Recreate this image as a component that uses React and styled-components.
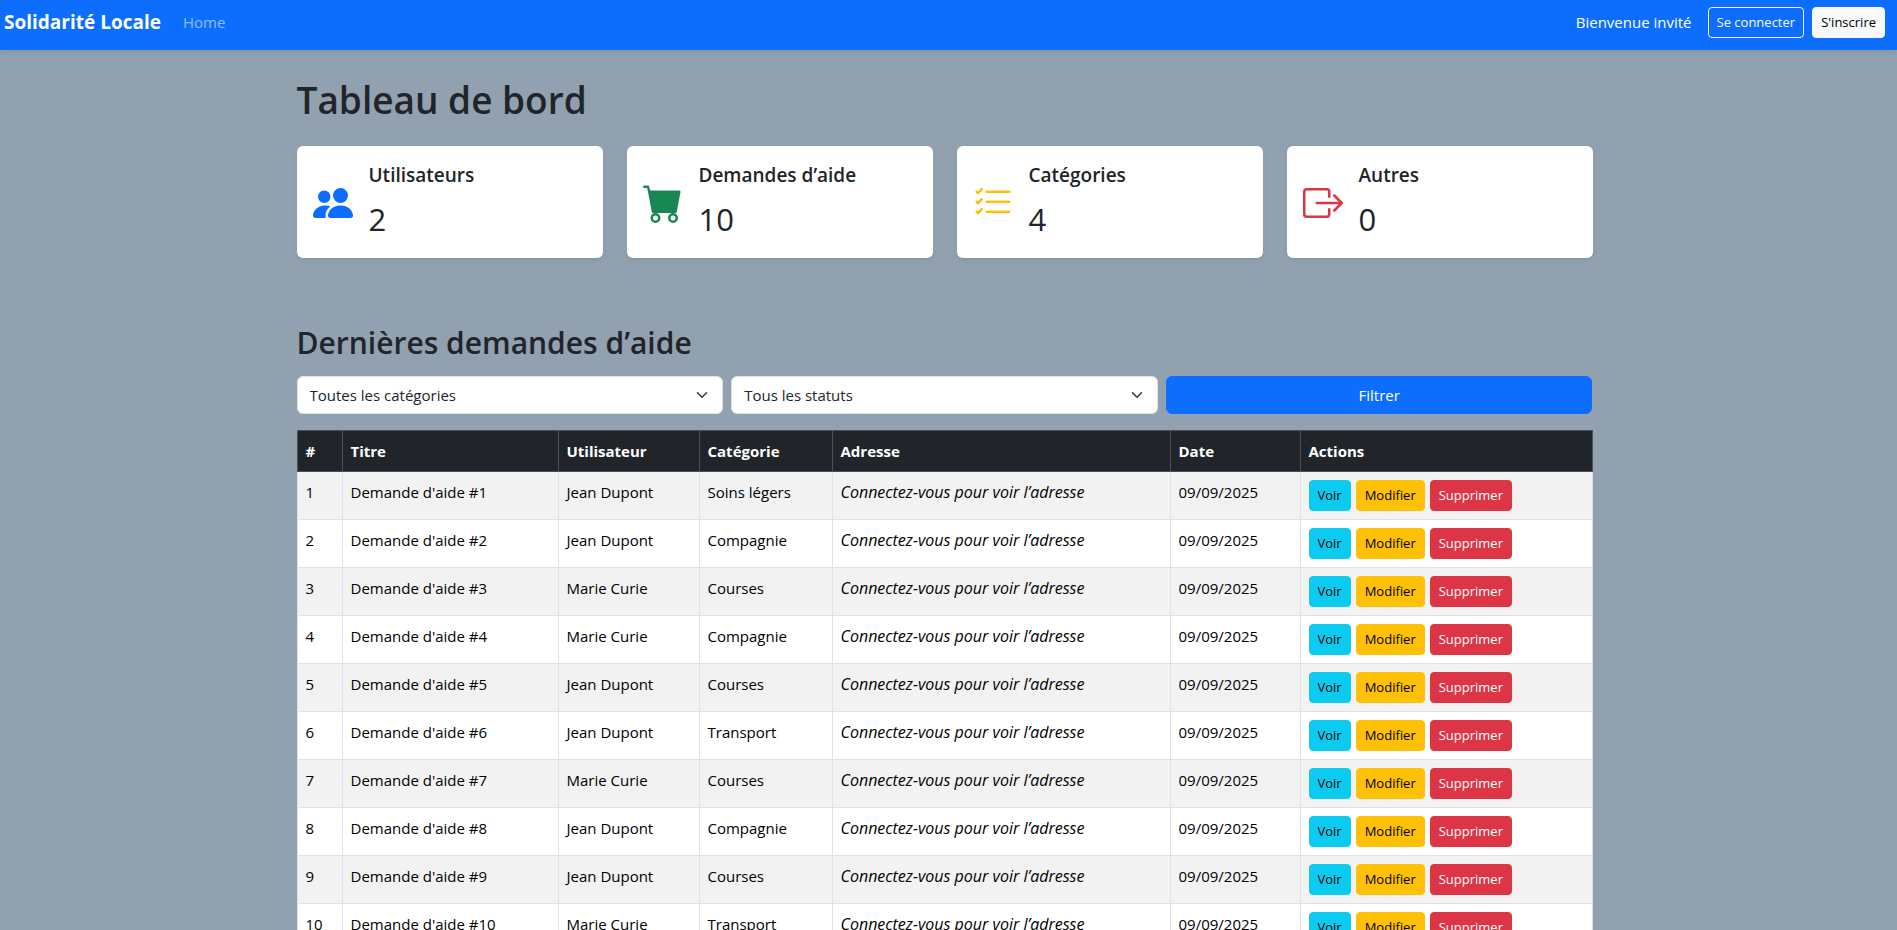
import React from "react";
import styled, { createGlobalStyle } from "styled-components";
import { BsPeopleFill, BsCartFill, BsListCheck, BsBoxArrowRight } from "react-icons/bs";

const GlobalStyle = createGlobalStyle`
  *, *::before, *::after { box-sizing: border-box; }
  body {
    margin: 0;
    background: #92a1b0;
    color: #212529;
    font-family: "Segoe UI", "Open Sans", "Noto Sans", sans-serif;
    font-size: 15px;
    line-height: 24px;
  }
`;

const Navbar = styled.header`
  display: flex;
  align-items: center;
  min-height: 50px;
  padding: 2px 12px 8px 4px;
  background: #0d6efd;
  box-shadow: 0 2px 4px rgba(0, 0, 0, 0.075);
`;

const Brand = styled.a`
  margin-right: 14px;
  color: #fff;
  font-size: 19px;
  font-weight: 700;
  text-decoration: none;
`;

const NavLinks = styled.nav`
  flex: 1;
`;

const NavLink = styled.a`
  padding: 8px;
  color: rgba(255, 255, 255, 0.55);
  text-decoration: none;
`;

const Account = styled.div`
  display: flex;
  align-items: center;
  gap: 8px;
`;

const Welcome = styled.span`
  margin-right: 8px;
  color: #fff;
`;

const variants = {
  outline: ["transparent", "#f8f9fa", "#f8f9fa"],
  light: ["#f8f9fa", "#000", "#f8f9fa"],
  info: ["#0dcaf0", "#000", "#0dcaf0"],
  warning: ["#ffc107", "#000", "#ffc107"],
  danger: ["#dc3545", "#fff", "#dc3545"],
};

const SmallButton = styled.button`
  height: 31px;
  padding: 0 8px;
  background: ${(p) => variants[p.$variant][0]};
  color: ${(p) => variants[p.$variant][1]};
  border: 1px solid ${(p) => variants[p.$variant][2]};
  border-radius: 4px;
  font: inherit;
  font-size: 13px;
  line-height: 21px;
  white-space: nowrap;
  cursor: pointer;
`;

const Main = styled.main`
  padding: 24px 8px 24px 0;
`;

const Container = styled.div`
  width: 100%;
  max-width: 1296px;
  margin: 0 auto;
`;

const PageTitle = styled.h1`
  margin: 0 0 20px;
  font-size: 37px;
  font-weight: 600;
  line-height: 52px;
`;

const Stats = styled.section`
  display: grid;
  grid-template-columns: repeat(4, 1fr);
  gap: 24px;
  margin-bottom: 64px;
`;

const StatCard = styled.article`
  display: flex;
  align-items: center;
  gap: 16px;
  padding: 16px;
  background: #fff;
  border-radius: 6px;
  box-shadow: 0 2px 4px rgba(0, 0, 0, 0.075);
`;

const StatIcon = styled.span`
  display: flex;
  padding-top: 2px;
  color: ${(p) => p.$color};
  font-size: 40px;
`;

const StatTitle = styled.h5`
  margin: 0 0 8px;
  font-size: 19px;
  font-weight: 600;
  line-height: 26px;
`;

const StatValue = styled.p`
  margin: 0;
  font-size: 31px;
  line-height: 46px;
`;

const SectionTitle = styled.h2`
  margin: 0 0 12px;
  font-size: 30px;
  font-weight: 600;
  line-height: 42px;
`;

const Filters = styled.form`
  display: grid;
  grid-template-columns: repeat(3, 1fr);
  gap: 8px;
  margin-bottom: 16px;
`;

const SelectBox = styled.div`
  position: relative;
`;

const Select = styled.select`
  appearance: none;
  display: block;
  width: 100%;
  height: 38px;
  padding: 0 36px 0 12px;
  background: #fff;
  color: #212529;
  border: 1px solid #dee2e6;
  border-radius: 6px;
  font: inherit;
`;

const Chevron = styled.svg`
  position: absolute;
  top: 13px;
  right: 13px;
  width: 16px;
  height: 12px;
  pointer-events: none;
`;

const FilterButton = styled.button`
  height: 38px;
  background: #0d6efd;
  color: #fff;
  border: 1px solid #0d6efd;
  border-radius: 6px;
  font: inherit;
  cursor: pointer;
`;

const Table = styled.table`
  width: 100%;
  table-layout: fixed;
  border-collapse: collapse;
  color: #000;
`;

const Column = styled.col`
  width: ${(p) => p.$width};
`;

const HeadCell = styled.th`
  padding: 8px;
  background: #212529;
  color: #fff;
  border: 1px solid #4d5154;
  font-weight: 700;
  text-align: left;
`;

const Row = styled.tr`
  background: #fff;
  &:nth-child(odd) { background: #f2f2f2; }
`;

const Cell = styled.td`
  padding: 8px;
  border: 1px solid #dee2e6;
  vertical-align: top;
`;

const HiddenAddress = styled.em`
  display: block;
  font-size: 16px;
`;

const Actions = styled.div`
  display: flex;
  gap: 5px;
`;

const stats = [
  { title: "Utilisateurs", value: 2, color: "#0d6efd", Icon: BsPeopleFill },
  { title: "Demandes d’aide", value: 10, color: "#198754", Icon: BsCartFill },
  { title: "Catégories", value: 4, color: "#ffc107", Icon: BsListCheck },
  { title: "Autres", value: 0, color: "#dc3545", Icon: BsBoxArrowRight },
];

const columns = [
  ["#", "45px"],
  ["Titre", "216px"],
  ["Utilisateur", "141px"],
  ["Catégorie", "133px"],
  ["Adresse", "338px"],
  ["Date", "130px"],
  ["Actions", "auto"],
];

const requests = [
  ["Jean Dupont", "Soins légers"],
  ["Jean Dupont", "Compagnie"],
  ["Marie Curie", "Courses"],
  ["Marie Curie", "Compagnie"],
  ["Jean Dupont", "Courses"],
  ["Jean Dupont", "Transport"],
  ["Marie Curie", "Courses"],
  ["Jean Dupont", "Compagnie"],
  ["Jean Dupont", "Courses"],
  ["Marie Curie", "Transport"],
];

function FilterSelect({ label, options }) {
  return (
    <SelectBox>
      <Select aria-label={label}>
        {options.map((option) => (
          <option key={option}>{option}</option>
        ))}
      </Select>
      <Chevron viewBox="0 0 16 16" fill="none" aria-hidden="true">
        <path d="m2 5 6 6 6-6" stroke="#343a40" strokeWidth="2" strokeLinecap="round" strokeLinejoin="round" />
      </Chevron>
    </SelectBox>
  );
}

export default function App() {
  return (
    <>
      <GlobalStyle />
      <Navbar>
        <Brand href="#">Solidarité Locale</Brand>
        <NavLinks>
          <NavLink href="#">Home</NavLink>
        </NavLinks>
        <Account>
          <Welcome>Bienvenue invité</Welcome>
          <SmallButton $variant="outline">Se connecter</SmallButton>
          <SmallButton $variant="light">S'inscrire</SmallButton>
        </Account>
      </Navbar>
      <Main>
        <Container>
          <PageTitle>Tableau de bord</PageTitle>
          <Stats>
            {stats.map(({ title, value, color, Icon }) => (
              <StatCard key={title}>
                <StatIcon $color={color}>
                  <Icon />
                </StatIcon>
                <div>
                  <StatTitle>{title}</StatTitle>
                  <StatValue>{value}</StatValue>
                </div>
              </StatCard>
            ))}
          </Stats>
          <SectionTitle>Dernières demandes d’aide</SectionTitle>
          <Filters>
            <FilterSelect label="Catégorie" options={["Toutes les catégories"]} />
            <FilterSelect label="Statut" options={["Tous les statuts"]} />
            <FilterButton type="button">Filtrer</FilterButton>
          </Filters>
          <Table>
            <colgroup>
              {columns.map(([name, width]) => (
                <Column key={name} $width={width} />
              ))}
            </colgroup>
            <thead>
              <tr>
                {columns.map(([name]) => (
                  <HeadCell key={name} scope="col">{name}</HeadCell>
                ))}
              </tr>
            </thead>
            <tbody>
              {requests.map(([user, category], i) => (
                <Row key={i}>
                  <Cell>{i + 1}</Cell>
                  <Cell>{`Demande d'aide #${i + 1}`}</Cell>
                  <Cell>{user}</Cell>
                  <Cell>{category}</Cell>
                  <Cell>
                    <HiddenAddress>Connectez-vous pour voir l’adresse</HiddenAddress>
                  </Cell>
                  <Cell>09/09/2025</Cell>
                  <Cell>
                    <Actions>
                      <SmallButton $variant="info">Voir</SmallButton>
                      <SmallButton $variant="warning">Modifier</SmallButton>
                      <SmallButton $variant="danger">Supprimer</SmallButton>
                    </Actions>
                  </Cell>
                </Row>
              ))}
            </tbody>
          </Table>
        </Container>
      </Main>
    </>
  );
}
